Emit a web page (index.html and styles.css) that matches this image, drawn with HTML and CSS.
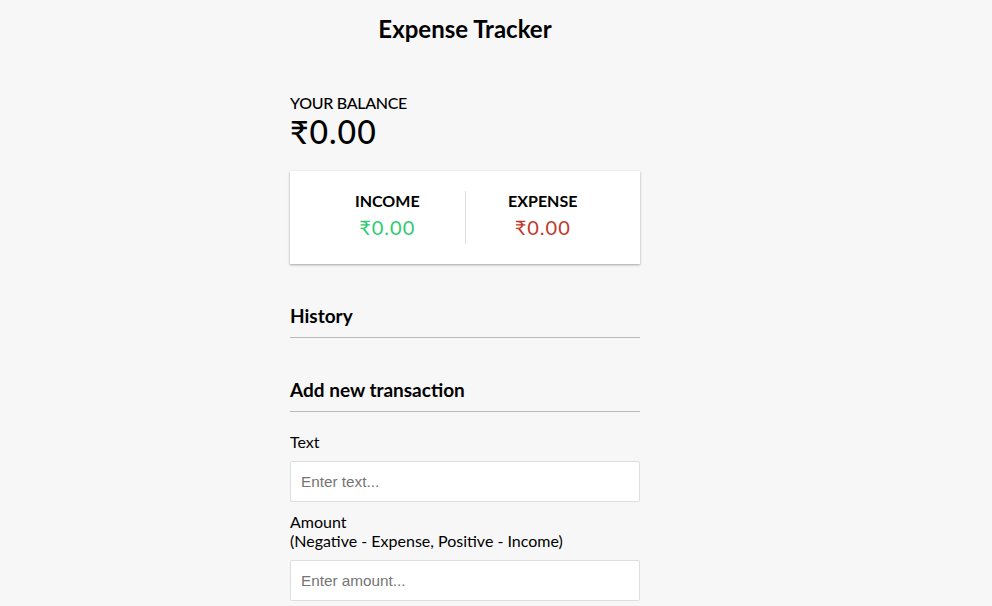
FILE: index.html
```html
<!DOCTYPE html>
<html lang="en">
<head>
    <meta charset="UTF-8">
    <meta name="viewport" content="width=device-width, initial-scale=1.0">
    <title>Expense Tracker</title>
    <link rel="stylesheet" href="styles.css">
</head>
<body>
    <div class="page">
        <h2 class="title">Expense Tracker</h2>

        <div class="container">
            <h4>Your Balance</h4>
            <h1 id="balance">₹0.00</h1>

            <div class="inc-exp-container">
                <div>
                    <h4>Income</h4>
                    <p id="money-plus" class="money plus">₹0.00</p>
                </div>
                <div>
                    <h4>Expense</h4>
                    <p id="money-minus" class="money minus">₹0.00</p>
                </div>
            </div>

            <h3>History</h3>
            <ul id="list" class="list"></ul>

            <h3>Add new transaction</h3>
            <form id="form">
                <div class="form-control">
                    <label for="text">Text</label>
                    <input type="text" id="text" placeholder="Enter text...">
                </div>
                <div class="form-control">
                    <label for="amount">Amount <br>(Negative - Expense, Positive - Income)</label>
                    <input type="number" id="amount" placeholder="Enter amount...">
                </div>
            </form>
        </div>
    </div>
</body>
</html>
```

FILE: styles.css
```css
/* General Styling */
* {
    box-sizing: border-box;
}
body {
    background-color: #f7f7f7;
    margin: 0;
    font-family: 'Lato', 'DejaVu Sans', sans-serif;
    color: #000;
}
.page {
    width: 930px;
    display: flex;
    flex-direction: column;
    align-items: center;
}
.title {
    font-size: 24px;
    margin: 14px 0 0;
}
.container {
    width: 350px;
    margin: 50px auto 0;
}
h1 {
    font-size: 32px;
    font-weight: 500;
    letter-spacing: 1px;
    margin: 0;
}
h4 {
    font-size: 16px;
    font-weight: 500;
    letter-spacing: -0.3px;
    text-transform: uppercase;
    margin: 0;
}
h3 {
    font-size: 19px;
    border-bottom: 1px solid #bbb;
    padding-bottom: 10px;
    margin: 40px 0 10px;
}

/* Income / Expense */
.inc-exp-container {
    background-color: #fff;
    box-shadow: 0 1px 3px rgba(0, 0, 0, 0.12), 0 1px 2px rgba(0, 0, 0, 0.24);
    padding: 20px;
    display: flex;
    justify-content: space-between;
    margin: 20px 0;
}
.inc-exp-container > div {
    flex: 1;
    text-align: center;
}
.inc-exp-container > div:first-of-type {
    border-right: 1px solid #dedede;
}
.inc-exp-container h4 {
    font-weight: 700;
    letter-spacing: 0;
}
.money {
    font-size: 20px;
    letter-spacing: 1px;
    margin: 5px 0;
}
.money.plus {
    color: #2ecc71;
}
.money.minus {
    color: #c0392b;
}

.list {
    list-style: none;
    padding: 0;
    margin: 0;
}

/* Form */
label {
    display: inline-block;
    margin: 10px 0;
    font-size: 16px;
}
.form-control label span {
    letter-spacing: -0.15px;
}
input {
    border: 1px solid #dedede;
    border-radius: 2px;
    display: block;
    font-family: 'Liberation Sans', Arial, sans-serif;
    font-size: 15.3px;
    padding: 10px;
    height: 41px;
    width: 100%;
    background: #fff;
}
input::placeholder {
    color: #757575;
}
```
